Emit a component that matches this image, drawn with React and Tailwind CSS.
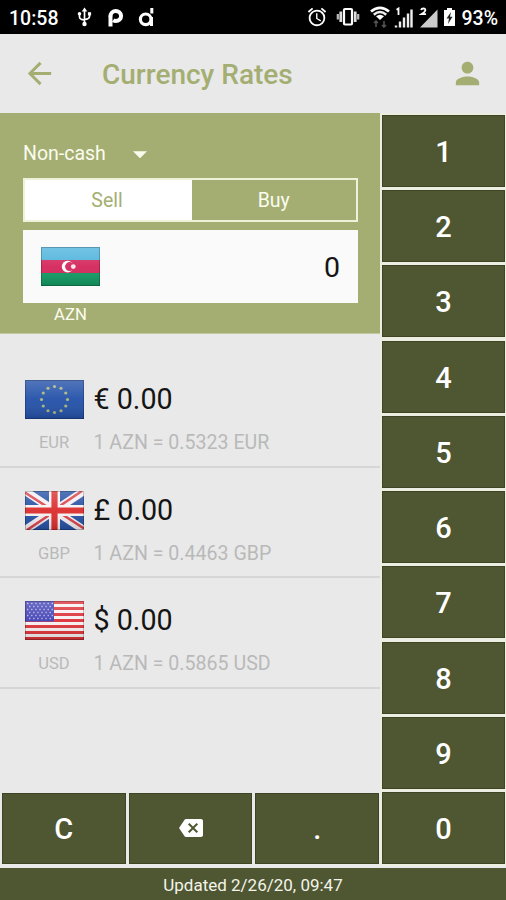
import React, { useState } from 'react';
import { MdArrowBack, MdPerson, MdBackspace, MdArrowDropDown, MdAlarm } from 'react-icons/md';

const rates = [
  { code: 'EUR', symbol: '€', rate: '0.5323' },
  { code: 'GBP', symbol: '£', rate: '0.4463' },
  { code: 'USD', symbol: '$', rate: '0.5865' },
];

function Gloss({ id }) {
  return (
    <>
      <defs>
        <linearGradient id={id} x1="0" y1="0" x2="0" y2="1">
          <stop offset="0" stopColor="#fff" stopOpacity="0.22" />
          <stop offset="0.5" stopColor="#fff" stopOpacity="0.05" />
          <stop offset="1" stopColor="#000" stopOpacity="0.15" />
        </linearGradient>
      </defs>
      <rect width="59" height="39" fill={`url(#${id})`} />
      <rect x="0.5" y="0.5" width="58" height="38" fill="none" stroke="#000" strokeOpacity="0.22" />
    </>
  );
}

function Flag({ code }) {
  const stars = Array.from({ length: 12 }, (_, i) => (i * Math.PI) / 6);
  return (
    <svg width="59" height="39" viewBox="0 0 59 39" className="block shrink-0">
      {code === 'AZN' && (
        <>
          <rect width="59" height="13" fill="#4db3dc" />
          <rect y="13" width="59" height="13" fill="#d4265a" />
          <rect y="26" width="59" height="13" fill="#109a62" />
          <circle cx="26.6" cy="19.6" r="5.8" fill="#fff" />
          <circle cx="28.6" cy="19.6" r="4.5" fill="#d4265a" />
          <circle cx="32.3" cy="19.6" r="2.4" fill="#fbe6ee" />
        </>
      )}
      {code === 'EUR' && (
        <>
          <rect width="59" height="39" fill="#2250a8" />
          {stars.map((a) => (
            <circle key={a} cx={29.5 + 13 * Math.sin(a)} cy={19.5 - 13 * Math.cos(a)} r="1.6" fill="#a9b57c" />
          ))}
        </>
      )}
      {code === 'GBP' && (
        <>
          <rect width="59" height="39" fill="#2450a4" />
          <path d="M0 0L59 39M59 0L0 39" stroke="#f3eef2" strokeWidth="8" />
          <path d="M0 1.5L24 17M59 37.5L35 22M57 0L34 15.5M2 39L25 23.5" stroke="#d8414a" strokeWidth="2.6" />
          <path d="M29.5 0V39M0 19.5H59" stroke="#f7f2f4" strokeWidth="11" />
          <path d="M29.5 0V39M0 19.5H59" stroke="#dc2c2c" strokeWidth="6.2" />
        </>
      )}
      {code === 'USD' && (
        <>
          <rect width="59" height="39" fill="#f8f0f0" />
          {[0, 2, 4, 6, 8, 10, 12].map((i) => (
            <rect key={i} y={i * 3} width="59" height="3" fill="#dc3238" />
          ))}
          <rect width="29" height="20.5" fill="#4141b4" />
          {[2.5, 5.5, 8.5, 11.5, 14.5, 17.5].map((y, i) => (
            <path key={y} d={`M${i % 2 ? 4 : 2} ${y}H28`} stroke="#b4b4e6" strokeWidth="1.3" strokeDasharray="1.4 2.7" />
          ))}
        </>
      )}
      <Gloss id={`gloss-${code}`} />
    </svg>
  );
}

function StatusBar() {
  return (
    <div className="flex h-[34px] shrink-0 items-center bg-black text-white">
      <span className="ml-[9px] w-[68px] pt-[3px] text-[19.5px] font-medium leading-none">10:58</span>
      <svg width="15" height="20" viewBox="0 0 15 20" fill="none" stroke="#fff" strokeWidth="1.7">
        <path d="M7.500 3V17M2.500 7V10Q2.500 12.500 7.500 13M12.500 7V9.500Q12.500 12 7.500 12.500" />
        <path d="M7.500 0.500L10.300 4.500H4.700z" fill="#fff" stroke="none" />
        <circle cx="7.500" cy="17" r="2.200" fill="#fff" stroke="none" />
        <circle cx="2.500" cy="6.800" r="1.800" fill="#fff" stroke="none" />
        <path d="M10.900 5.200H14.100V8.400H10.900z" fill="#fff" stroke="none" />
      </svg>
      <svg className="ml-[16px]" width="16" height="20" viewBox="0 0 16 20" fill="none" stroke="#fff">
        <path d="M2.500 19.500V8.500" strokeWidth="4" />
        <path d="M2.500 9.500a5.300 5 0 1 1 5.300 4.500c-1 0-1.800-.2-2.600-.8" strokeWidth="4" />
      </svg>
      <svg className="ml-[14px]" width="17" height="20" viewBox="0 0 17 20" fill="none" stroke="#fff">
        <path d="M13 12.300a5.300 5.300 0 1 0-5.300 5.300a5.300 5.300 0 0 0 5.300-5.300" strokeWidth="3.200" />
        <path d="M13.800 1V6.500M13.500 10V19" strokeWidth="3" />
      </svg>
      <div className="ml-auto flex items-center">
        <MdAlarm className="h-[22px] w-[22px]" />
        <svg className="ml-[8px]" width="24" height="20" viewBox="0 0 24 20">
          <rect x="8" y="2" width="8" height="15.500" rx="1" fill="none" stroke="#fff" strokeWidth="2.200" />
          <path d="M4.800 4.500V15M19.200 4.500V15" stroke="#ddd" strokeWidth="2.800" />
          <path d="M1.800 7V12.500M22.200 7V12.500" stroke="#bbb" strokeWidth="2.200" />
        </svg>
        <svg className="ml-[10px]" width="20" height="22" viewBox="0 0 20 22" fill="none">
          <path d="M1 5.500Q10-1.800 19 5.500" stroke="#fff" strokeWidth="2.800" />
          <path d="M3.800 8.700Q10 3.200 16.200 8.700" stroke="#eee" strokeWidth="2.500" />
          <path d="M6 10.300Q10 7 14 10.300L10 14z" fill="#fff" />
          <path d="M6 21V15M4 17L6 15L8 17M14 15V21M12 19L14 21L16 19" stroke="#555" strokeWidth="1.500" />
        </svg>
        <svg className="ml-[4px]" width="19" height="21" viewBox="0 0 19 21">
          <path d="M2.500 2.800L4.500 1.500V8" stroke="#fff" strokeWidth="1.800" fill="none" />
          <path d="M2 20.500V18.500M6 20.500V14.500M10 20.500V10.500M14 20.500V6.500M17.500 20.500V2.500" stroke="#eee" strokeWidth="2.400" />
        </svg>
        <svg className="ml-[6px]" width="19" height="21" viewBox="0 0 19 21">
          <path d="M1 20.500L18.500 2.500V20.500z" fill="#ccc" />
          <path d="M2 3Q2.500 1.500 4.300 1.500Q6.600 1.500 6.300 3.300Q6 5 2.300 7.200H7" stroke="#fff" strokeWidth="1.800" fill="none" />
        </svg>
        <svg className="ml-[5px]" width="13" height="20" viewBox="0 0 13 20">
          <path d="M4 1H9V3H12V19H1V3H4z" fill="#fff" />
          <path d="M8 5L3.500 11.500H6L5 17L9.500 9.800H7z" fill="#222" />
        </svg>
        <span className="ml-[5px] mr-[8px] pt-[3px] text-[19.5px] font-medium leading-none">93%</span>
      </div>
    </div>
  );
}

function Header() {
  return (
    <header className="flex h-[79px] shrink-0 items-center text-[#a4ae72]">
      <MdArrowBack className="ml-[22px] h-[35px] w-[35px]" />
      <h1 className="ml-[45px] pt-[3px] text-[28px] font-medium leading-none">Currency Rates</h1>
      <MdPerson className="ml-auto mr-[21px] h-[35px] w-[35px]" />
    </header>
  );
}

function Key({ children, onClick }) {
  return (
    <button
      onClick={onClick}
      className="flex min-h-0 min-w-0 flex-1 items-center justify-center border border-[#3f4524] bg-[#4f5632] pt-[3px] text-[29px] font-medium leading-none text-white"
    >
      {children}
    </button>
  );
}

function RateRow({ code, symbol, rate }) {
  return (
    <div className="flex h-[110.7px] border-b-2 border-[#d6d6d6] pl-[24.5px] pt-[23px]">
      <div className="flex w-[59px] flex-col items-center">
        <Flag code={code} />
        <span className="mt-[15px] text-[16.5px] leading-[18px] text-[#b9b9b9]">{code}</span>
      </div>
      <div className="ml-[10px]">
        <p className="text-[28.7px] leading-[39px] text-[#151515]">{symbol} 0.00</p>
        <p className="mt-[13px] text-[19.6px] leading-[22px] text-[#b9b9b9]">1 AZN = {rate} {code}</p>
      </div>
    </div>
  );
}

export default function App() {
  const [amount, setAmount] = useState('0');
  const [mode, setMode] = useState('Sell');

  const press = (key) => {
    setAmount((prev) => (prev === '0' && key !== '.' ? key : prev + key));
  };

  return (
    <div className="flex h-[900px] w-[506px] flex-col overflow-hidden bg-[#e9e9e9] font-['Roboto',sans-serif]">
      <StatusBar />
      <Header />

      <div className="flex h-[753px] shrink-0">
        <main className="flex w-[380px] flex-col">
          <section className="h-[221px] shrink-0 border-b border-[#c3caa0] bg-[#a4ae72] pl-[23px] pr-[22.5px] pt-[29px] text-[#fbfcef]">
            <div className="flex h-[24px] items-center text-[19.5px] leading-none">
              Non-cash
              <MdArrowDropDown className="ml-[17px] h-[34px] w-[34px]" />
            </div>
            <div className="mt-[12px] flex h-[44px] border-2 border-[#eff2d9]">
              {['Sell', 'Buy'].map((m) => (
                <button
                  key={m}
                  onClick={() => setMode(m)}
                  className={`pt-[2px] text-[19.5px] leading-none ${m === 'Sell' ? 'w-[167px] pr-[3px]' : 'flex-1'} ${
                    mode === m ? 'bg-white text-[#a4ae72]' : ''
                  }`}
                >
                  {m}
                </button>
              ))}
            </div>
            <div className="mt-[7.5px] flex h-[73px] items-center justify-between bg-[#fafafa] pl-[18px] pr-[17.5px]">
              <Flag code="AZN" />
              <span className="pt-[4px] text-[28.5px] leading-none text-[#151515]">{amount}</span>
            </div>
            <p className="ml-[18px] mt-[3px] w-[59px] text-center text-[16.7px] leading-[18px]">AZN</p>
          </section>

          <section className="min-h-0 flex-1 pt-[23px]">
            {rates.map((r) => (
              <RateRow key={r.code} {...r} />
            ))}
          </section>

          <div className="flex h-[75.3px] shrink-0 gap-[3px] py-[2px] pl-[2px] pr-px">
            <Key onClick={() => setAmount('0')}>C</Key>
            <Key onClick={() => setAmount((prev) => prev.slice(0, -1) || '0')}>
              <MdBackspace className="mb-[3px] h-[24px] w-[24px]" />
            </Key>
            <Key onClick={() => press('.')}>.</Key>
          </div>
        </main>

        <aside className="flex flex-1 flex-col gap-[3.3px] bg-[#eceee2] py-[2px] pl-[2px] pr-px">
          {['1', '2', '3', '4', '5', '6', '7', '8', '9', '0'].map((k) => (
            <Key key={k} onClick={() => press(k)}>{k}</Key>
          ))}
        </aside>
      </div>

      <footer className="mt-[2px] flex-1 bg-[#4f5632] pt-[7px] text-center text-[17px] leading-[20px] text-[#f3f4ea]">
        Updated 2/26/20, 09:47
      </footer>
    </div>
  );
}
